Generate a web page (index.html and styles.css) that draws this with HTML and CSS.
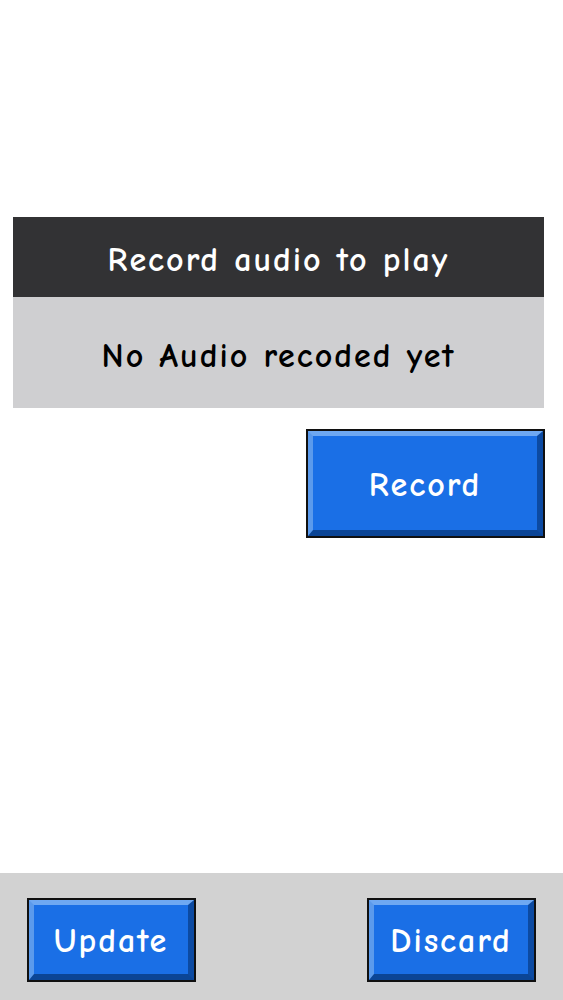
FILE: index.html
```html
<!DOCTYPE html>
<html lang="en">
<head>
<meta charset="utf-8">
<title>Record audio</title>
<link rel="stylesheet" href="styles.css">
</head>
<body>
<div class="app">
  <main class="main">
    <section class="panel">
      <div class="panel-header">Record audio to play</div>
      <div class="panel-body">No Audio recoded yet</div>
    </section>
    <div class="actions">
      <button class="btn btn-large" type="button"><span class="btn-face">Record</span></button>
    </div>
  </main>
  <footer class="footer">
    <button class="btn btn-small" type="button"><span class="btn-face">Update</span></button>
    <button class="btn btn-small" type="button"><span class="btn-face">Discard</span></button>
  </footer>
</div>
</body>
</html>
```

FILE: styles.css
```css
html, body {
  margin: 0;
  padding: 0;
  background: #ffffff;
}

body {
  font-family: "Comic Sans MS", "Comic Neue", "DejaVu Sans", sans-serif;
  font-size: 34px;
  font-weight: 700;
  letter-spacing: 2px;
}

.app {
  display: flex;
  flex-direction: column;
  height: 100vh;
}

.main {
  flex: 1;
  padding: 217px 19px 0 13px;
}

.panel-header {
  height: 80px;
  background: #323234;
  color: #ffffff;
  display: flex;
  align-items: center;
  justify-content: center;
  padding-top: 6px;
  box-sizing: border-box;
}

.panel-body {
  height: 111px;
  background: #cfcfd1;
  color: #000000;
  display: flex;
  align-items: center;
  justify-content: center;
  padding-top: 6px;
  box-sizing: border-box;
}

.actions {
  display: flex;
  justify-content: flex-end;
  margin-top: 21px;
  margin-right: -1px;
}

.btn {
  box-sizing: border-box;
  padding: 0;
  margin: 0;
  border: 2px solid #101010;
  background: #101010;
  font: inherit;
  letter-spacing: inherit;
  cursor: pointer;
  display: block;
}

.btn-face {
  box-sizing: border-box;
  display: flex;
  align-items: center;
  justify-content: center;
  height: 100%;
  width: 100%;
  padding-top: 3px;
  border-style: solid;
  border-width: 5px 6px 6px 5px;
  border-color: #6ea8f2 #0c4aa2 #0b4596 #5b9aec;
  background: #1a6fe6;
  color: #ffffff;
}

.btn-large {
  width: 239px;
  height: 109px;
}

.btn-small {
  width: 169px;
  height: 84px;
}

.footer {
  height: 127px;
  box-sizing: border-box;
  background: #d2d2d2;
  display: flex;
  justify-content: space-between;
  align-items: flex-start;
  padding: 25px 27px 0 27px;
}
```
